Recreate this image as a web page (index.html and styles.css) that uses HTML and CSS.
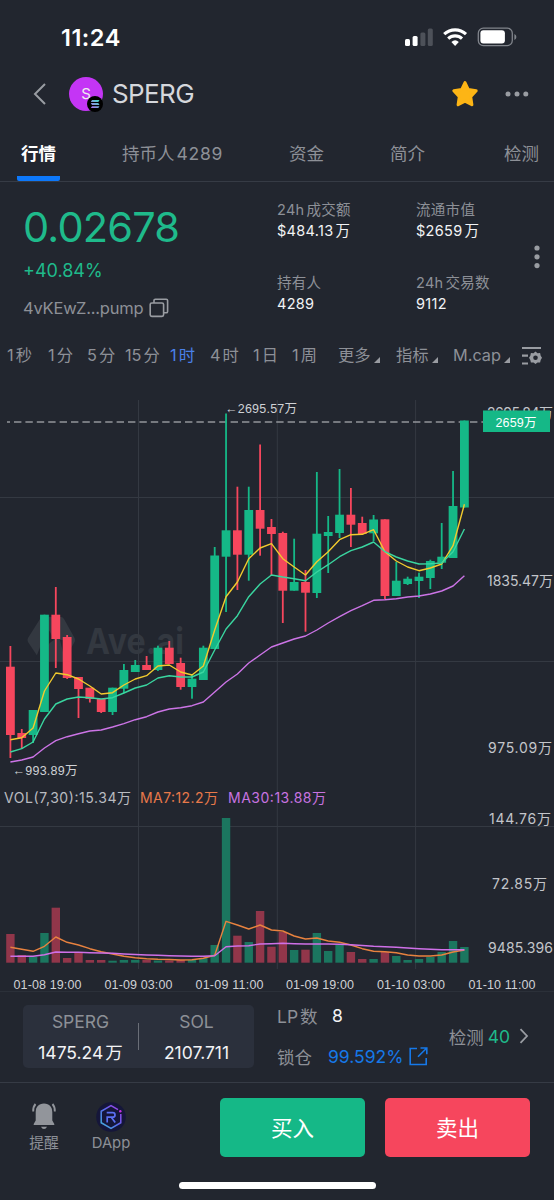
FILE: index.html
```html
<!DOCTYPE html>
<html lang="zh-CN">
<head>
  <meta charset="UTF-8">
  <meta name="viewport" content="width=device-width, initial-scale=1.0">
  <title>SPERG</title>
  <link rel="stylesheet" href="styles.css">
</head>
<body>
  <div class="status-bar">
    <span class="time">11:24</span>
    <svg class="status-icons" width="114" height="24" viewBox="0 0 114 24">
      <rect x="0" y="14" width="5" height="7" rx="1.5" fill="#fff"/>
      <rect x="7.6" y="11" width="5" height="10" rx="1.5" fill="#fff"/>
      <rect x="15.4" y="7.500" width="5" height="13.5" rx="1.5" fill="#4d5159"/>
      <rect x="22.8" y="3.500" width="5" height="17.5" rx="1.5" fill="#4d5159"/>
      <g fill="none" stroke="#fff" stroke-width="3.1">
        <path d="M39.2 9.2a16 16 0 0 1 21.8 0"/>
        <path d="M43.2 13.6a10 10 0 0 1 13.8 0"/>
      </g>
      <path d="M46.4 17a5.6 5.6 0 0 1 7.4 0l-3.7 3.9z" fill="#fff"/>
      <rect x="73.3" y="3.2" width="34" height="17.4" rx="5" fill="none" stroke="#80848b" stroke-width="1.3"/>
      <rect x="75.4" y="5.3" width="24.5" height="13.2" rx="3" fill="#fff"/>
      <path d="M109.4 9v6q2-.8 2-3t-2-3z" fill="#80848b"/>
    </svg>
  </div>

  <header class="header">
    <svg class="back" width="14" height="24" viewBox="0 0 14 24"><path d="M12 2 2 12l10 10"/></svg>
    <div class="avatar">
      S
      <svg class="chain" width="16" height="16" viewBox="0 0 16 16">
        <defs>
          <linearGradient id="sol" x1="0" y1="1" x2="1" y2="0">
            <stop offset="0" stop-color="#b06af0"/>
            <stop offset="1" stop-color="#3fe0c0"/>
          </linearGradient>
        </defs>
        <circle cx="8" cy="8" r="8" fill="#000"/>
        <path d="M5 4h7.5l-1.2 1.9H3.8zM3.8 7.1h7.5L12.5 9H5zM5 10.2h7.5l-1.2 1.9H3.8z" fill="url(#sol)"/>
      </svg>
    </div>
    <h1>SPERG</h1>
    <svg class="star" width="28" height="28" viewBox="0 0 28 28">
      <path d="M14 2.6 17.2 9.5 25.2 10.8 19.7 16.6 20.9 24.8 14 21.1 7.1 24.8 8.3 16.6 2.8 10.8 10.8 9.5z"/>
    </svg>
    <svg class="dots" width="24" height="6" viewBox="0 0 24 6">
      <circle cx="3" cy="3" r="2.5"/><circle cx="12" cy="3" r="2.5"/><circle cx="20.8" cy="3" r="2.5"/>
    </svg>
  </header>

  <nav class="tabs">
    <a class="active">行情</a>
    <a>持币人<i></i><span>4289</span></a>
    <a>资金</a>
    <a>简介</a>
    <a>检测</a>
  </nav>

  <section class="summary">
    <div class="price-box">
      <div class="price">0.02678</div>
      <div class="change">+40.84%</div>
      <div class="address">
        <span>4vKEwZ...pump</span>
        <svg width="20" height="20" viewBox="0 0 20 20">
          <rect x="1.2" y="5" width="13.4" height="13.4" rx="1.6"/>
          <path d="M5 5V2.6q0-1.4 1.4-1.4h10.8q1.4 0 1.4 1.4v10.8q0 1.4-1.4 1.4h-2.6"/>
        </svg>
      </div>
    </div>
    <dl class="stats">
      <div><dt>24h<i></i>成交额</dt><dd>$484.13<i></i>万</dd></div>
      <div><dt>流通市值</dt><dd>$2659<i></i>万</dd></div>
      <div><dt>持有人</dt><dd>4289</dd></div>
      <div><dt>24h<i></i>交易数</dt><dd>9112</dd></div>
    </dl>
    <svg class="more" width="6" height="24" viewBox="0 0 6 24">
      <circle cx="3" cy="3" r="2.6"/><circle cx="3" cy="11.8" r="2.6"/><circle cx="3" cy="20.6" r="2.6"/>
    </svg>
  </section>

  <div class="periods">
    <span>1<i></i>秒</span>
    <span>1<i></i>分</span>
    <span>5<i></i>分</span>
    <span>15<i></i>分</span>
    <span class="active">1<i></i>时</span>
    <span>4<i></i>时</span>
    <span>1<i></i>日</span>
    <span>1<i></i>周</span>
    <span class="drop">更多</span>
    <span class="drop">指标</span>
    <span class="drop">M.cap</span>
    <svg width="21" height="20" viewBox="0 0 21 20">
      <path d="M0 2h19M0 9.700h6M0 17.500h6" stroke="#999ca2" stroke-width="2.200"/>
      <path d="M13.500 5.500l2 1.700 2.600-.2.600 2.700 1.300 2.100-1.300 2.100-.6 2.700-2.600-.2-2 1.700-2-1.700-2.600.2-.6-2.700L7 11.800l1.300-2.100.6-2.700 2.600.2z" fill="#999ca2"/>
      <circle cx="13.500" cy="11.800" r="2.300" fill="#22262f"/>
    </svg>
  </div>

  <svg class="chart" width="554" height="611" viewBox="0 380 554 611">
    <path class="grid" d="M138.500 400V969M277.300 400V969M415.600 400V969M0 497.500H554M0 661.500H554M0 826.500H554"/>

    <g class="watermark">
      <path d="M40 619q1-2 3-2h18q2 0 3 2l10 18q2 3 0 6l-10 17q-1 2-3 2H43q-2 0-3-2l-12-18q-1-2 0-4z"/>
      <path class="cut" d="M35 660l11-28q2-4 4 0l4 8q-10 5-10 22z"/>
      <path class="cut" d="M60 640l6 0 10 20h-11z"/>
      <text x="86" y="654" textLength="98" lengthAdjust="spacingAndGlyphs">Ave.ai</text>
    </g>

    <path class="last-line" d="M7 422H483"/>
    <g id="candles"></g>
    <g id="volume"></g>
    <g id="lines"></g>

    <g class="mark">
      <text x="225" y="413" textLength="72">←2695.57万</text>
      <text x="12.500" y="775" textLength="65">←993.89万</text>
    </g>

    <g class="axis">
      <text x="487" y="418" textLength="66">2695.84万</text>
      <text x="487" y="586" textLength="66">1835.47万</text>
      <text x="488" y="753" textLength="64">975.09万</text>
      <text x="489" y="824" textLength="62">144.76万</text>
      <text x="492" y="889" textLength="55">72.85万</text>
      <text x="488" y="953" textLength="65">9485.396</text>
    </g>
    <rect class="tag" x="483" y="410.500" width="67" height="21.500"/>
    <text class="tag-text" x="495.500" y="427" textLength="41">2659万</text>

    <g class="legend">
      <text x="4" y="803" textLength="127">VOL(7,30):15.34万</text>
      <text x="140" y="803" textLength="78" fill="#e8794a">MA7:12.2万</text>
      <text x="228" y="803" textLength="98" fill="#c873e0">MA30:13.88万</text>
    </g>

    <g class="dates">
      <text x="13.500" y="989" textLength="68">01-08 19:00</text>
      <text x="104.500" y="989" textLength="68">01-09 03:00</text>
      <text x="195.500" y="989" textLength="68">01-09 11:00</text>
      <text x="286" y="989" textLength="68">01-09 19:00</text>
      <text x="377" y="989" textLength="68">01-10 03:00</text>
      <text x="468.500" y="989" textLength="67">01-10 11:00</text>
    </g>
  </svg>

  <section class="pool">
    <div class="pair">
      <div><span>SPERG</span><b>1475.24<i></i>万</b></div>
      <div><span>SOL</span><b>2107.711</b></div>
    </div>
    <div class="lp">
      <div><span>LP<i></i>数</span><b>8</b></div>
      <div>
        <span>锁仓</span><a>99.592%</a>
        <svg width="19" height="19" viewBox="0 0 19 19"><path d="M8 1.500H1.200v16h16V11M11.500 1h6.300v6.300M17.500 1.300 9 9.800"/></svg>
      </div>
    </div>
    <div class="check">检测<em>40</em>
      <svg width="10" height="16" viewBox="0 0 10 16"><path d="m1.500 1.200 6.500 6.800-6.500 6.800"/></svg>
    </div>
  </section>

  <footer class="footer">
    <div class="tool">
      <svg width="28" height="30" viewBox="0 0 28 30">
        <path d="M14 1.500c5.500 0 8.300 3.600 8.300 8.500v8.500l2 3.500v1H3.700v-1l2-3.500V10c0-4.900 2.800-8.500 8.300-8.500z" fill="#92959b"/>
        <path d="M11 24.700h6q-1 2.300-3 2.300t-3-2.300z" fill="#92959b"/>
        <path d="M6 2Q3 4.800 3.200 9.500M22 2Q25 4.800 24.800 9.500" fill="none" stroke="#22262f" stroke-width="4"/>
        <path d="M5.500 2Q3 4.800 3.200 9.500M22.500 2Q25 4.800 24.800 9.500" fill="none" stroke="#92959b" stroke-width="1.900"/>
      </svg>
      <span>提醒</span>
    </div>
    <div class="tool">
      <svg width="30" height="30" viewBox="0 0 30 30">
        <defs>
          <linearGradient id="ray" x1="0" y1="1" x2="1" y2="0">
            <stop offset="0" stop-color="#3fb6d8"/>
            <stop offset=".5" stop-color="#5a6cf0"/>
            <stop offset="1" stop-color="#b035e6"/>
          </linearGradient>
        </defs>
        <circle cx="15" cy="15" r="14.800" fill="#15163a"/>
        <path d="M24.800 12v8.700L15 26.300l-9.800-5.600V9.300L15 3.700l7 4" fill="none" stroke="url(#ray)" stroke-width="1.500"/>
        <path d="M11.200 20.500v-5.300h5.500q2.300 0 2.300-2.300t-2.300-2.300h-6M15.500 15.500l3.700 5" fill="none" stroke="#5b70f2" stroke-width="1.700"/>
        <circle cx="24.300" cy="9.300" r="1.200" fill="#c92fe6"/>
      </svg>
      <span>DApp</span>
    </div>
    <button class="buy">买入</button>
    <button class="sell">卖出</button>
  </footer>
  <div class="home-bar"></div>

  <script>
    // [up, body top, body bottom, wick top, wick bottom, volume top]
    const data = [
      [0, 666.7, 735, 646, 758, 934], [0, 733, 738, 729, 749, 955], [1, 710, 735, 710, 743, 956.7],
      [1, 614.7, 712, 614.7, 712, 933], [0, 614.7, 639, 587, 668, 907.7], [0, 637, 678, 635, 679, 958],
      [0, 677, 689, 677, 718, 952], [0, 687.7, 699, 688, 702.5, 960], [0, 699, 712, 699, 713, 960],
      [1, 687.7, 712, 687.7, 715, 960.7], [1, 670, 688.7, 664, 693, 960], [1, 665, 672, 660, 672, 960],
      [0, 665, 670, 656, 670, 960], [1, 647.7, 670, 645.7, 671, 960.5], [0, 647.7, 664, 641, 664, 960.5],
      [0, 663, 687, 657.7, 689.7, 960], [1, 678.7, 687, 674, 698.7, 960], [1, 647.7, 680, 645.7, 680, 958],
      [1, 555.5, 649, 547, 649, 945], [1, 530.3, 556.7, 413.5, 612, 818], [0, 530.3, 554.7, 486.7, 590, 935.7],
      [1, 510, 554.7, 486.7, 580.7, 942], [0, 510, 528.7, 444.5, 555.7, 911], [0, 527, 534, 519, 576, 946.7],
      [0, 533, 590.7, 531.7, 623, 932], [1, 582, 590.7, 538.7, 590.7, 950], [0, 582, 592.7, 570, 631.7, 949.7],
      [1, 533.7, 593, 472, 598, 933], [1, 532, 536, 516, 573, 951], [1, 514.7, 533, 469, 538, 944.7],
      [0, 514.7, 524.7, 488, 547, 952], [0, 523, 534, 516.7, 535, 959], [1, 519.5, 533.3, 515, 541, 959],
      [0, 519.3, 596, 519.3, 599, 952], [1, 580.7, 596, 562, 596, 956], [1, 578.7, 584, 576.7, 585, 960],
      [1, 576.7, 581, 572.7, 598, 959], [1, 561, 578, 559.7, 589, 957], [1, 556.7, 562.7, 523, 569, 952],
      [1, 506, 558, 471, 558, 941], [1, 420.5, 507.5, 420.5, 507.5, 947]
    ];

    const averages = {
      '#f2cb2e': [739.7, 737.7, 728, 691, 673, 674.7, 679, 686, 694, 692.7, 685, 679, 675.7, 666, 665, 672, 675, 666,
        630, 596.7, 582, 558.7, 548, 543.7, 558.7, 567, 575, 561.7, 551.7, 539.7, 534.7, 534.3, 529.7, 551.7,
        561, 567, 570.7, 568, 564, 545.7, 504.3],
      '#3ad6a0': [752, 748.7, 742, 719, 704, 699, 697, 697.7, 699, 697.7, 693, 688, 685, 678, 675.7, 677, 677, 672,
        650, 629, 615.7, 596.7, 584, 575, 577, 578.7, 580.7, 572, 564.7, 556.7, 550.7, 547, 542, 551.7,
        557, 561, 564, 563.7, 563, 551.7, 529],
      '#cc74e6': [762, 760, 757, 748, 740.7, 736.7, 733.7, 731, 730, 727, 723.7, 719.7, 716.7, 712, 709, 707.7, 705.7, 702,
        692, 682, 674, 663, 655, 647, 643, 639, 636, 630, 623, 616.7, 610.7, 605.7, 600.3, 599.7,
        598.7, 597, 596, 594, 591, 586, 575.7],
      '#e8823f': [947.3, 949.3, 951.3, 946.3, 937, 942.3, 945, 948.7, 951.7, 954, 956.3, 957.7, 958.7, 959.3, 959.5, 960, 959.7, 958.3,
        955.3, 921.3, 925, 929, 925, 930, 931, 936, 939, 938, 941, 942.3, 945, 948.7, 951.3, 951.7,
        952.7, 955, 956, 956, 955, 952, 950],
      '#cf70e8': [956.3, 956.3, 956.3, 954.7, 952, 952.3, 952.3, 952.7, 953, 953.3, 954, 954.5, 955, 955.3, 955.7, 956, 956.3, 956.3,
        955.7, 946.7, 946, 945.7, 944, 943.7, 943.3, 943.7, 944, 944, 944, 944.3, 944.7, 945.5, 946.3, 946.7,
        947.3, 948, 948.7, 949.3, 949.7, 949.7, 949.7]
    };

    const step = 11.35;
    const base = 962.7;
    const x = i => 10.4 + i * step;
    let candles = '';
    let volume = '';

    data.forEach(([up, top, bottom, high, low, vol], i) => {
      const cls = up ? 'up' : 'down';
      candles += `<rect class="${cls}" x="${x(i) - 0.9}" y="${high}" width="1.8" height="${low - high}"/>
        <rect class="${cls}" x="${x(i) - 4.4}" y="${top}" width="8.8" height="${bottom - top}"/>`;
      volume += `<rect class="${cls}" x="${x(i) - 4.2}" y="${vol}" width="8.4" height="${base - vol}"/>`;
    });

    document.getElementById('candles').innerHTML = candles;
    document.getElementById('volume').innerHTML = volume;
    document.getElementById('lines').innerHTML = Object.entries(averages).map(([color, ys]) =>
      `<polyline points="${ys.map((y, i) => x(i) + ',' + y).join(' ')}" stroke="${color}"/>`
    ).join('');
  </script>
</body>
</html>
```
FILE: styles.css
```css
* {
  margin: 0;
  padding: 0;
  box-sizing: border-box;
}

body {
  width: 554px;
  height: 1200px;
  overflow: hidden;
  background: #22262f;
  color: #8d9097;
  font-family: Inter, 'Noto Sans CJK SC', sans-serif;
  text-autospace: no-autospace;
}

svg {
  display: block;
  flex-shrink: 0;
}

/* thin gap between latin and chinese text */
i {
  display: inline-block;
  width: 2px;
}

.status-bar {
  display: flex;
  justify-content: space-between;
  align-items: center;
  height: 74px;
  padding: 0 35px 0 61px;
}

.time {
  color: #fff;
  font-size: 23.5px;
  font-weight: 600;
  letter-spacing: 0.5px;
}

.header {
  display: flex;
  align-items: center;
  height: 40px;
  padding: 0 25px 0 33px;
}

.back {
  fill: none;
  stroke: #999ca2;
  stroke-width: 2;
}

.avatar {
  position: relative;
  width: 34px;
  height: 34px;
  margin: 0 9px 0 22px;
  border-radius: 50%;
  background: #c435f5;
  color: #eee;
  font-size: 15px;
  line-height: 34px;
  text-align: center;
}

.chain {
  position: absolute;
  right: 0;
  bottom: -1px;
}

h1 {
  flex: 1;
  color: #d5d7dc;
  font-size: 26px;
  font-weight: 400;
  line-height: 38px;
  letter-spacing: -0.6px;
  padding-bottom: 1px;
}

.star {
  margin-right: 26px;
  fill: #fdb515;
  stroke: #fdb515;
  stroke-width: 3;
  stroke-linejoin: round;
}

.dots,
.more {
  fill: #999ca2;
}

.tabs {
  display: flex;
  height: 68px;
  padding: 0 15px 0 17px;
  border-bottom: 1px solid #363b45;
  font-size: 17.5px;
  line-height: 80px;
}

.tabs a {
  margin-right: 66px;
  white-space: nowrap;
}

.tabs a span {
  letter-spacing: 0.7px;
}

.tabs a:nth-child(4) {
  margin-right: 79px;
}

.tabs a:last-child {
  margin-right: 0;
}

.tabs .active {
  width: 43px;
  height: 67px;
  margin-right: 62px;
  border-bottom: 5px solid #0d78fa;
  border-radius: 2px;
  color: #fff;
  font-weight: 600;
  text-align: center;
}

.summary {
  display: flex;
  height: 153px;
  padding: 0 14px 0 23px;
}

.price-box {
  width: 254px;
}

.price {
  height: 72px;
  padding-top: 19px;
  color: #1fba8b;
  font-size: 41.5px;
  line-height: 52px;
  letter-spacing: -0.8px;
}

.change {
  height: 34px;
  color: #1fba8b;
  font-size: 18px;
  line-height: 34px;
}

.address {
  display: flex;
  align-items: center;
  gap: 6px;
  height: 40px;
  font-size: 16.5px;
  letter-spacing: -0.2px;
}

.address svg {
  fill: none;
  stroke: #999ca2;
  stroke-width: 1.6;
}

.stats {
  display: grid;
  grid-template-columns: 139px 1fr;
  grid-auto-rows: 72.5px;
  flex: 1;
  padding-top: 17px;
  font-size: 14.5px;
  line-height: 21px;
  letter-spacing: 0.3px;
}

.stats dd {
  color: #f2f3f5;
}

.more {
  margin-top: 63px;
}

.periods {
  display: grid;
  grid-template-columns: 41px 39px 38px 45px 40px 43px 39px 46px 58px 57px 69px auto;
  align-items: center;
  height: 45px;
  padding: 0 7px 4px;
  font-size: 16.3px;
  line-height: 41px;
  white-space: nowrap;
}

.periods .active {
  color: #4a80e8;
}

.drop::after {
  content: '';
  display: inline-block;
  margin: 0 0 -2px 3px;
  border: 3.5px solid #999ca2;
  border-top-color: transparent;
  border-left-color: transparent;
}

.grid {
  fill: none;
  stroke: #343942;
}

.watermark {
  fill: #333840;
  font-size: 36px;
  font-weight: 700;
}

.watermark .cut {
  fill: #22262f;
}

.last-line {
  stroke: #92959b;
  stroke-width: 1.6;
  stroke-dasharray: 7.4 4;
  stroke-dashoffset: 4.4;
}

.up {
  fill: #15b887;
}

.down {
  fill: #f6465d;
}

#volume .up {
  fill: #1b765f;
}

#volume .down {
  fill: #91364a;
}

#lines {
  fill: none;
  stroke-width: 1.4;
  stroke-linejoin: round;
}

.mark,
.dates {
  fill: #cfd1d5;
  font-family: 'Liberation Sans', 'Noto Sans CJK SC', sans-serif;
  font-size: 12.5px;
}

.axis {
  fill: #c3c5ca;
  font-size: 14px;
}

.tag {
  fill: #15b887;
}

.tag-text {
  fill: #fff;
  font-family: 'Liberation Sans', 'Noto Sans CJK SC', sans-serif;
  font-size: 12.5px;
}

.legend {
  fill: #b9bbc0;
  font-size: 14px;
}

.pool {
  display: flex;
  height: 92px;
  padding: 13px 25px 14px 23px;
  border-top: 1px solid #2b3039;
  border-bottom: 1px solid #363b45;
}

.pool b {
  color: #f2f3f5;
  font-weight: 400;
}

.pair {
  display: flex;
  align-items: center;
  width: 231px;
  height: 63px;
  border-radius: 5px;
  background: #2b303c;
}

.pair div {
  flex: 1;
  display: flex;
  flex-direction: column;
  font-size: 17.5px;
  line-height: 31px;
  text-align: center;
}

.pair div + div {
  border-left: 1px solid #6a6e77;
  height: 27px;
  justify-content: center;
}

.pair b {
  font-size: 17.5px;
}

.lp {
  flex: 1;
  padding-left: 23px;
  font-size: 17.5px;
}

.lp div {
  display: flex;
  align-items: center;
  height: 41px;
  margin-top: -10px;
}

.lp div + div {
  margin-top: 0;
}

.lp span {
  width: 51px;
}

.lp b {
  padding-left: 4px;
}

.lp a {
  margin-right: 6px;
  color: #1678e8;
}

.lp svg {
  fill: none;
  stroke: #1678e8;
  stroke-width: 1.6;
}

.check {
  display: flex;
  align-items: center;
  height: 62px;
  font-size: 17.5px;
}

.check em {
  margin: 0 9px 0 4px;
  color: #1fba8b;
  font-style: normal;
}

.check svg {
  fill: none;
  stroke: #999ca2;
  stroke-width: 1.8;
}

.footer {
  display: flex;
  height: 100px;
  padding: 15px 24px 0 14px;
}

.tool {
  display: flex;
  flex-direction: column;
  align-items: center;
  width: 60px;
  margin-right: 7px;
  padding-top: 4px;
  font-size: 14.8px;
  line-height: 23px;
}

.footer button {
  width: 145px;
  height: 59px;
  padding-bottom: 2px;
  border: none;
  border-radius: 5px;
  color: #fff;
  font: 400 21.5px 'Noto Sans CJK SC', sans-serif;
}

.buy {
  margin-left: auto;
  background: #15b887;
}

.footer .sell {
  margin-left: 20px;
  background: #f6465d;
}

.home-bar {
  width: 197px;
  height: 7px;
  margin: -1px auto 0;
  border-radius: 4px;
  background: #fff;
}
```
